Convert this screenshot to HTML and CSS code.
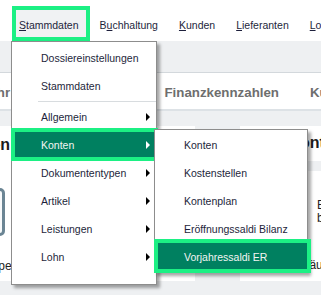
FILE: index.html
```html
<!DOCTYPE html>
<html>
<head>
  <meta charset="utf-8">
  <title>Stammdaten</title>
  <link rel="stylesheet" href="styles.css">
</head>
<body>
  <div class="topnav">
    <span class="nav-item active"><u>S</u>tammdaten</span>
    <span class="nav-item">B<u>u</u>chhaltung</span>
    <span class="nav-item"><u>K</u>unden</span>
    <span class="nav-item"><u>L</u>ieferanten</span>
    <span class="nav-item"><u>L</u>ohn</span>
  </div>

  <div class="subbar"></div>

  <div class="tabs">
    <span class="tab">Jahr</span>
    <span class="tab">Auswertungen</span>
    <span class="tab">Finanzkennzahlen</span>
    <span class="tab">Kunden</span>
  </div>

  <div class="content">
    <div class="card left-card">
      <div class="card-title">Konten</div>
      <div class="check-box"></div>
      <div class="card-text">Typgruppe</div>
    </div>
    <div class="col">
      <div class="card head-card">
        <div class="card-title">Bankkonten</div>
      </div>
      <div class="card body-card">
        <div class="info-row">
          <span class="info-label">Hinweis</span>
          <span class="info-text">Eröffnungssaldo bereits verbucht</span>
        </div>
        <div class="card-text">Konto Gebäudeunterhalt</div>
      </div>
    </div>
  </div>

  <!-- dropdown of Stammdaten -->
  <div class="menu main-menu">
    <div class="menu-item">Dossiereinstellungen</div>
    <div class="menu-item">Stammdaten</div>
    <div class="menu-sep"></div>
    <div class="menu-item has-sub">Allgemein</div>
    <div class="menu-item has-sub selected">Konten</div>
    <div class="menu-item has-sub">Dokumententypen</div>
    <div class="menu-item has-sub">Artikel</div>
    <div class="menu-item has-sub">Leistungen</div>
    <div class="menu-item has-sub">Lohn</div>
  </div>

  <div class="menu sub-menu">
    <div class="menu-item">Konten</div>
    <div class="menu-item">Kostenstellen</div>
    <div class="menu-item">Kontenplan</div>
    <div class="menu-item">Eröffnungssaldi Bilanz</div>
    <div class="menu-item selected last">Vorjahressaldi ER</div>
  </div>
</body>
</html>
```

FILE: styles.css
```css
body {
  margin: 0;
  width: 321px;
  height: 295px;
  overflow: hidden;
  position: relative;
  background: #eef0f2;
  font-family: 'Liberation Sans', Arial, sans-serif;
  color: #1d1f3b;
}

/* top menu bar */
.topnav {
  height: 41px;
  background: #fff;
  display: flex;
  align-items: flex-end;
  padding-left: 12px;
  white-space: nowrap;
}

.nav-item {
  height: 35px;
  box-sizing: border-box;
  padding: 3px 11px 0 10px;
  display: flex;
  align-items: center;
  font-size: 10.5px;
  color: #1d1f3b;
}

.nav-item.active {
  border: 4px solid #1cf084;
  padding: 3px 7px 0 3px;
  background: #f0f2f3;
}

.subbar {
  height: 31px;
  border-bottom: 1px solid #d3d8dc;
}

.tabs {
  height: 38px;
  box-sizing: border-box;
  padding-top: 2px;
  background: #fff;
  border-bottom: 2px solid #dde2e6;
  display: flex;
  align-items: center;
  gap: 31px;
  white-space: nowrap;
}

.tab {
  font-size: 13.3px;
  font-weight: bold;
  color: #6e6e6e;
}

.tab:first-child {
  margin-left: -18px;
}

/* dashboard cards */
.content {
  display: flex;
  gap: 45px;
  margin-left: -60px;
  padding-top: 15px;
  height: 155px;
}

.card {
  background: #fff;
  box-sizing: border-box;
}

.left-card {
  width: 255px;
  flex-shrink: 0;
  padding: 9px 0 0 15px;
}

.card-title {
  font-size: 16px;
  font-weight: bold;
  line-height: 20px;
  color: #1b1b1b;
  white-space: nowrap;
}

.check-box {
  width: 40px;
  height: 48px;
  box-sizing: border-box;
  margin: 33px 0 0 10px;
  border: 3px solid #6b8594;
  border-radius: 5px;
  background: #f7f9fa;
}

.card-text {
  font-size: 12px;
  line-height: 16px;
  color: #222;
  white-space: nowrap;
}

.left-card .card-text {
  margin-top: 22px;
}

.col {
  flex: 1;
  display: flex;
  flex-direction: column;
  gap: 10px;
}

.head-card {
  height: 35px;
  padding: 7px 0 0 12px;
}

.body-card {
  flex: 1;
  padding: 28px 0 0 12px;
}

.info-row {
  display: flex;
  font-size: 12px;
  line-height: 13px;
  color: #222;
}

.info-label {
  width: 65px;
  flex-shrink: 0;
}

.info-text {
  width: 95px;
}

.body-card .card-text {
  margin-top: 32px;
}

/* dropdown menus */
.menu {
  position: absolute;
  background: #fff;
  border: 1px solid #8d8d8d;
  box-sizing: border-box;
  box-shadow: 3px 3px 3px rgba(0, 0, 0, 0.35);
}

.main-menu {
  left: 11px;
  top: 41px;
  width: 146px;
  padding: 2px 0 13px;
}

.sub-menu {
  left: 154px;
  top: 129px;
  width: 154px;
  padding: 1px 0 1px;
}

.menu-item {
  position: relative;
  height: 28px;
  padding-left: 29px;
  display: flex;
  align-items: center;
  font-size: 10.5px;
  color: #1d1f3b;
  white-space: nowrap;
}

.menu-sep {
  height: 1px;
  margin: 1px 0 1px 26px;
  background: #d8dcdf;
}

.has-sub::after {
  content: "";
  position: absolute;
  right: 6px;
  top: 10px;
  border-left: 4px solid #000;
  border-top: 4px solid transparent;
  border-bottom: 4px solid transparent;
}

.menu-item.selected {
  background: #008060;
  color: #f2f5f3;
}

.menu-item.selected::after {
  border-left-color: #fff;
}

.menu-item.selected::before {
  content: "";
  position: absolute;
  left: -1px;
  right: -2px;
  top: -3px;
  bottom: -2px;
  border: 4px solid #1cf084;
}

.menu-item.selected.last::before {
  right: -4px;
  top: -4px;
}
```
